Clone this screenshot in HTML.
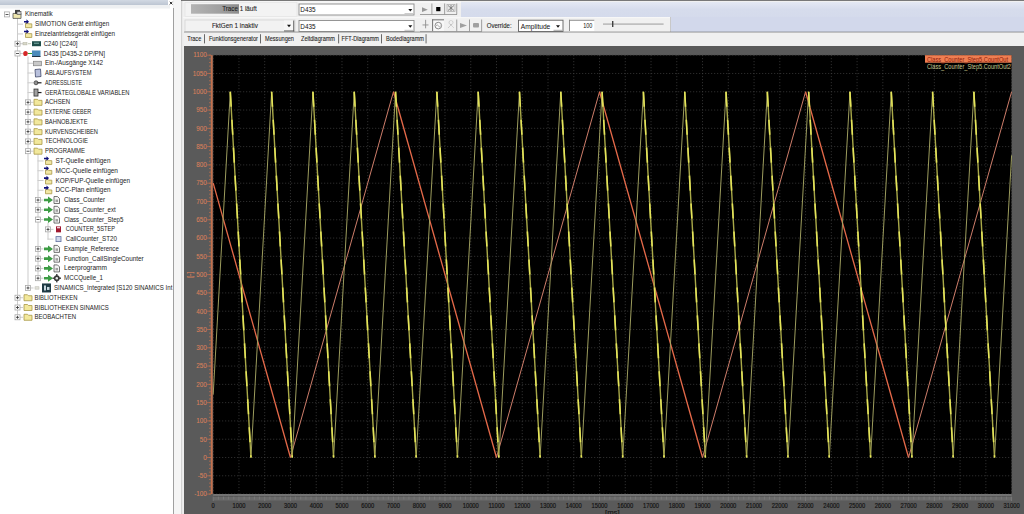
<!DOCTYPE html><html><head><meta charset="utf-8"><style>
*{margin:0;padding:0}
html,body{width:1024px;height:514px;overflow:hidden;background:#f0f0f0}
svg{position:absolute;left:0;top:0;font-family:"Liberation Sans", sans-serif}
</style></head><body>
<svg width="1024" height="514" viewBox="0 0 1024 514" font-family="Liberation Sans">
<rect x="0.00" y="0.00" width="1024.00" height="514.00" fill="#f0f0f0" /><rect x="0.00" y="0.00" width="173.00" height="514.00" fill="#ffffff" /><defs><linearGradient id="hdr" x1="0" y1="0" x2="0" y2="1"><stop offset="0" stop-color="#d2d9e3"/><stop offset="1" stop-color="#bcc5d2"/></linearGradient><linearGradient id="prog" x1="0" y1="0" x2="1" y2="0"><stop offset="0" stop-color="#b4b4b4"/><stop offset="0.6" stop-color="#a0a0a0"/><stop offset="1" stop-color="#8c8c8c"/></linearGradient><clipPath id="treeclip"><rect x="0" y="0" width="172.8" height="514"/></clipPath><linearGradient id="lav" x1="0" y1="0" x2="0" y2="1"><stop offset="0" stop-color="#e4e8f3"/><stop offset="0.25" stop-color="#d6dcec"/><stop offset="1" stop-color="#d2d8eb"/></linearGradient></defs><rect x="0.00" y="5.00" width="170.00" height="3.50" fill="#eef0f2" /><rect x="0.00" y="0.00" width="168.00" height="5.00" fill="url(#hdr)" /><line x1="169.80" y1="1.80" x2="172.40" y2="4.40" stroke="#111" stroke-width="0.9" /><line x1="172.40" y1="1.80" x2="169.80" y2="4.40" stroke="#111" stroke-width="0.9" /><rect x="173.00" y="8.00" width="1.00" height="506.00" fill="#a0a0a0" /><rect x="174.00" y="0.00" width="7.50" height="514.00" fill="#f5f5f5" /><rect x="181.30" y="0.00" width="1.00" height="514.00" fill="#c4c4c4" /><rect x="182.30" y="0.00" width="1.70" height="514.00" fill="#eeeeee" /><rect x="17.00" y="17.40" width="1.00" height="300.37" fill="#cccccc" /><rect x="27.50" y="56.48" width="1.00" height="231.98" fill="#cccccc" /><rect x="37.50" y="154.18" width="1.00" height="124.51" fill="#cccccc" /><rect x="47.50" y="222.57" width="1.00" height="17.04" fill="#cccccc" /><rect x="17.00" y="23.67" width="6.00" height="1.00" fill="#cccccc" /><rect x="17.00" y="33.44" width="6.00" height="1.00" fill="#cccccc" /><rect x="17.00" y="43.21" width="6.00" height="1.00" fill="#cccccc" /><rect x="17.00" y="52.98" width="6.00" height="1.00" fill="#cccccc" /><rect x="27.50" y="62.75" width="6.00" height="1.00" fill="#cccccc" /><rect x="27.50" y="72.52" width="6.00" height="1.00" fill="#cccccc" /><rect x="27.50" y="82.29" width="6.00" height="1.00" fill="#cccccc" /><rect x="27.50" y="92.06" width="6.00" height="1.00" fill="#cccccc" /><rect x="27.50" y="101.83" width="6.00" height="1.00" fill="#cccccc" /><rect x="27.50" y="111.60" width="6.00" height="1.00" fill="#cccccc" /><rect x="27.50" y="121.37" width="6.00" height="1.00" fill="#cccccc" /><rect x="27.50" y="131.14" width="6.00" height="1.00" fill="#cccccc" /><rect x="27.50" y="140.91" width="6.00" height="1.00" fill="#cccccc" /><rect x="27.50" y="150.68" width="6.00" height="1.00" fill="#cccccc" /><rect x="37.50" y="160.45" width="6.00" height="1.00" fill="#cccccc" /><rect x="37.50" y="170.22" width="6.00" height="1.00" fill="#cccccc" /><rect x="37.50" y="179.99" width="6.00" height="1.00" fill="#cccccc" /><rect x="37.50" y="189.76" width="6.00" height="1.00" fill="#cccccc" /><rect x="37.50" y="199.53" width="6.00" height="1.00" fill="#cccccc" /><rect x="37.50" y="209.30" width="6.00" height="1.00" fill="#cccccc" /><rect x="37.50" y="219.07" width="6.00" height="1.00" fill="#cccccc" /><rect x="47.50" y="228.84" width="6.00" height="1.00" fill="#cccccc" /><rect x="47.50" y="238.61" width="6.00" height="1.00" fill="#cccccc" /><rect x="37.50" y="248.38" width="6.00" height="1.00" fill="#cccccc" /><rect x="37.50" y="258.15" width="6.00" height="1.00" fill="#cccccc" /><rect x="37.50" y="267.92" width="6.00" height="1.00" fill="#cccccc" /><rect x="37.50" y="277.69" width="6.00" height="1.00" fill="#cccccc" /><rect x="27.50" y="287.46" width="6.00" height="1.00" fill="#cccccc" /><rect x="17.00" y="297.23" width="6.00" height="1.00" fill="#cccccc" /><rect x="17.00" y="307.00" width="6.00" height="1.00" fill="#cccccc" /><rect x="17.00" y="316.77" width="6.00" height="1.00" fill="#cccccc" /><rect x="4.50" y="11.90" width="5.00" height="5.00" fill="#fff" stroke="#a8a8a8" stroke-width="0.8"/><rect x="5.50" y="14.00" width="3.00" height="0.80" fill="#303030" /><polygon points="13.00,13.40 21.00,13.40 21.00,18.40 13.00,18.40" fill="#f0e8b0" stroke="#505050" stroke-width="0.8"/><rect x="15.00" y="9.90" width="5.00" height="4.00" fill="#404040" /><rect x="17.00" y="11.40" width="4.00" height="3.00" fill="#d0d0d0" stroke="#404040" stroke-width="0.6"/><text x="25.00" y="16.45" font-size="6.3" fill="#1c1c1c" textLength="27.75" lengthAdjust="spacingAndGlyphs" clip-path="url(#treeclip)">Kinematik</text><polygon points="25.50,23.17 28.00,23.17 28.80,23.87 31.80,23.87 31.80,27.67 25.50,27.67" fill="#f2e8a4" stroke="#a89848" stroke-width="0.8"/><polygon points="24.00,20.97 26.50,20.97 26.50,19.37 29.00,21.77 26.50,24.17 26.50,22.57 24.00,22.57" fill="#10107a" /><text x="35.00" y="26.22" font-size="6.3" fill="#1c1c1c" textLength="74.25" lengthAdjust="spacingAndGlyphs" clip-path="url(#treeclip)">SIMOTION Gerät einfügen</text><polygon points="25.50,32.94 28.00,32.94 28.80,33.64 31.80,33.64 31.80,37.44 25.50,37.44" fill="#f2e8a4" stroke="#a89848" stroke-width="0.8"/><polygon points="24.00,30.74 26.50,30.74 26.50,29.14 29.00,31.54 26.50,33.94 26.50,32.34 24.00,32.34" fill="#10107a" /><text x="35.00" y="35.99" font-size="6.3" fill="#1c1c1c" textLength="80.00" lengthAdjust="spacingAndGlyphs" clip-path="url(#treeclip)">Einzelantriebsgerät einfügen</text><rect x="15.00" y="41.21" width="5.00" height="5.00" fill="#fff" stroke="#a8a8a8" stroke-width="0.8"/><rect x="16.00" y="43.31" width="3.00" height="0.80" fill="#303030" /><rect x="17.10" y="42.21" width="0.80" height="3.00" fill="#303030" /><rect x="23.00" y="42.51" width="4.00" height="2.40" fill="#d8d8c8" stroke="#b0b0a0" stroke-width="0.5"/><rect x="28.00" y="43.21" width="3.00" height="1.00" fill="#c0c8b0" /><rect x="32.00" y="41.21" width="9.00" height="5.00" fill="#1f4e4a" /><rect x="34.00" y="42.71" width="5.00" height="1.00" fill="#7fb0a8" /><text x="43.75" y="45.76" font-size="6.3" fill="#1c1c1c" textLength="33.75" lengthAdjust="spacingAndGlyphs" clip-path="url(#treeclip)">C240 [C240]</text><rect x="15.00" y="50.98" width="5.00" height="5.00" fill="#fff" stroke="#a8a8a8" stroke-width="0.8"/><rect x="16.00" y="53.08" width="3.00" height="0.80" fill="#303030" /><ellipse cx="25.5" cy="53.48" rx="2.3" ry="2.6" fill="#d42828"/><rect x="28.00" y="52.98" width="4.00" height="1.00" fill="#30a030" /><rect x="32.00" y="50.48" width="8.50" height="6.00" fill="#4c8cbc" /><rect x="32.00" y="55.98" width="8.50" height="1.00" fill="#203040" /><text x="43.75" y="55.53" font-size="6.3" fill="#1c1c1c" textLength="61.25" lengthAdjust="spacingAndGlyphs" clip-path="url(#treeclip)">D435 [D435-2 DP/PN]</text><rect x="33.50" y="61.25" width="8.00" height="4.50" fill="#c8c8c8" stroke="#808080" stroke-width="0.7"/><text x="45.00" y="65.30" font-size="6.3" fill="#1c1c1c" textLength="58.00" lengthAdjust="spacingAndGlyphs" clip-path="url(#treeclip)">Ein-/Ausgänge X142</text><polygon points="35.00,69.52 40.50,69.02 41.00,76.52 35.50,77.02" fill="#b8c0dc" stroke="#404868" stroke-width="0.8"/><text x="45.00" y="75.07" font-size="6.3" fill="#1c1c1c" textLength="46.50" lengthAdjust="spacingAndGlyphs" clip-path="url(#treeclip)">ABLAUFSYSTEM</text><circle cx="36" cy="82.79" r="2" fill="#909090" stroke="#303030" stroke-width="0.7"/><rect x="37.50" y="82.19" width="4.00" height="1.20" fill="#202020" /><text x="45.00" y="84.84" font-size="6.3" fill="#1c1c1c" textLength="37.00" lengthAdjust="spacingAndGlyphs" clip-path="url(#treeclip)">ADRESSLISTE</text><rect x="34.00" y="89.06" width="4.00" height="7.00" fill="#a0a0a0" stroke="#303030" stroke-width="0.8"/><rect x="38.00" y="91.96" width="3.50" height="1.20" fill="#202020" /><text x="45.00" y="94.61" font-size="6.3" fill="#1c1c1c" textLength="84.50" lengthAdjust="spacingAndGlyphs" clip-path="url(#treeclip)">GERÄTEGLOBALE VARIABLEN</text><rect x="25.50" y="99.83" width="5.00" height="5.00" fill="#fff" stroke="#a8a8a8" stroke-width="0.8"/><rect x="26.50" y="101.93" width="3.00" height="0.80" fill="#303030" /><rect x="27.60" y="100.83" width="0.80" height="3.00" fill="#303030" /><polygon points="34.00,99.33 37.50,99.33 38.50,100.33 42.00,100.33 42.00,105.33 34.00,105.33" fill="#f2e89c" stroke="#a89848" stroke-width="0.8"/><text x="45.00" y="104.38" font-size="6.3" fill="#1c1c1c" textLength="25.00" lengthAdjust="spacingAndGlyphs" clip-path="url(#treeclip)">ACHSEN</text><rect x="25.50" y="109.60" width="5.00" height="5.00" fill="#fff" stroke="#a8a8a8" stroke-width="0.8"/><rect x="26.50" y="111.70" width="3.00" height="0.80" fill="#303030" /><rect x="27.60" y="110.60" width="0.80" height="3.00" fill="#303030" /><polygon points="34.00,109.10 37.50,109.10 38.50,110.10 42.00,110.10 42.00,115.10 34.00,115.10" fill="#f2e89c" stroke="#a89848" stroke-width="0.8"/><text x="45.00" y="114.15" font-size="6.3" fill="#1c1c1c" textLength="46.25" lengthAdjust="spacingAndGlyphs" clip-path="url(#treeclip)">EXTERNE GEBER</text><rect x="25.50" y="119.37" width="5.00" height="5.00" fill="#fff" stroke="#a8a8a8" stroke-width="0.8"/><rect x="26.50" y="121.47" width="3.00" height="0.80" fill="#303030" /><rect x="27.60" y="120.37" width="0.80" height="3.00" fill="#303030" /><polygon points="34.00,118.87 37.50,118.87 38.50,119.87 42.00,119.87 42.00,124.87 34.00,124.87" fill="#f2e89c" stroke="#a89848" stroke-width="0.8"/><text x="45.00" y="123.92" font-size="6.3" fill="#1c1c1c" textLength="42.50" lengthAdjust="spacingAndGlyphs" clip-path="url(#treeclip)">BAHNOBJEKTE</text><rect x="25.50" y="129.14" width="5.00" height="5.00" fill="#fff" stroke="#a8a8a8" stroke-width="0.8"/><rect x="26.50" y="131.24" width="3.00" height="0.80" fill="#303030" /><rect x="27.60" y="130.14" width="0.80" height="3.00" fill="#303030" /><polygon points="34.00,128.64 37.50,128.64 38.50,129.64 42.00,129.64 42.00,134.64 34.00,134.64" fill="#f2e89c" stroke="#a89848" stroke-width="0.8"/><text x="45.00" y="133.69" font-size="6.3" fill="#1c1c1c" textLength="53.00" lengthAdjust="spacingAndGlyphs" clip-path="url(#treeclip)">KURVENSCHEIBEN</text><rect x="25.50" y="138.91" width="5.00" height="5.00" fill="#fff" stroke="#a8a8a8" stroke-width="0.8"/><rect x="26.50" y="141.01" width="3.00" height="0.80" fill="#303030" /><rect x="27.60" y="139.91" width="0.80" height="3.00" fill="#303030" /><polygon points="34.00,138.41 37.50,138.41 38.50,139.41 42.00,139.41 42.00,144.41 34.00,144.41" fill="#f2e89c" stroke="#a89848" stroke-width="0.8"/><text x="45.00" y="143.46" font-size="6.3" fill="#1c1c1c" textLength="43.00" lengthAdjust="spacingAndGlyphs" clip-path="url(#treeclip)">TECHNOLOGIE</text><rect x="25.50" y="148.68" width="5.00" height="5.00" fill="#fff" stroke="#a8a8a8" stroke-width="0.8"/><rect x="26.50" y="150.78" width="3.00" height="0.80" fill="#303030" /><polygon points="34.00,148.18 37.50,148.18 38.50,149.18 42.00,149.18 42.00,154.18 34.00,154.18" fill="#f2e89c" stroke="#a89848" stroke-width="0.8"/><text x="45.00" y="153.23" font-size="6.3" fill="#1c1c1c" textLength="40.00" lengthAdjust="spacingAndGlyphs" clip-path="url(#treeclip)">PROGRAMME</text><polygon points="45.50,159.95 48.00,159.95 48.80,160.65 51.80,160.65 51.80,164.45 45.50,164.45" fill="#f2e8a4" stroke="#a89848" stroke-width="0.8"/><polygon points="44.00,157.75 46.50,157.75 46.50,156.15 49.00,158.55 46.50,160.95 46.50,159.35 44.00,159.35" fill="#10107a" /><text x="55.50" y="163.00" font-size="6.3" fill="#1c1c1c" textLength="55.00" lengthAdjust="spacingAndGlyphs" clip-path="url(#treeclip)">ST-Quelle einfügen</text><polygon points="45.50,169.72 48.00,169.72 48.80,170.42 51.80,170.42 51.80,174.22 45.50,174.22" fill="#f2e8a4" stroke="#a89848" stroke-width="0.8"/><polygon points="44.00,167.52 46.50,167.52 46.50,165.92 49.00,168.32 46.50,170.72 46.50,169.12 44.00,169.12" fill="#10107a" /><text x="55.50" y="172.77" font-size="6.3" fill="#1c1c1c" textLength="62.50" lengthAdjust="spacingAndGlyphs" clip-path="url(#treeclip)">MCC-Quelle einfügen</text><polygon points="45.50,179.49 48.00,179.49 48.80,180.19 51.80,180.19 51.80,183.99 45.50,183.99" fill="#f2e8a4" stroke="#a89848" stroke-width="0.8"/><polygon points="44.00,177.29 46.50,177.29 46.50,175.69 49.00,178.09 46.50,180.49 46.50,178.89 44.00,178.89" fill="#10107a" /><text x="55.50" y="182.54" font-size="6.3" fill="#1c1c1c" textLength="74.50" lengthAdjust="spacingAndGlyphs" clip-path="url(#treeclip)">KOP/FUP-Quelle einfügen</text><polygon points="45.50,189.26 48.00,189.26 48.80,189.96 51.80,189.96 51.80,193.76 45.50,193.76" fill="#f2e8a4" stroke="#a89848" stroke-width="0.8"/><polygon points="44.00,187.06 46.50,187.06 46.50,185.46 49.00,187.86 46.50,190.26 46.50,188.66 44.00,188.66" fill="#10107a" /><text x="55.50" y="192.31" font-size="6.3" fill="#1c1c1c" textLength="55.00" lengthAdjust="spacingAndGlyphs" clip-path="url(#treeclip)">DCC-Plan einfügen</text><rect x="35.50" y="197.53" width="5.00" height="5.00" fill="#fff" stroke="#a8a8a8" stroke-width="0.8"/><rect x="36.50" y="199.63" width="3.00" height="0.80" fill="#303030" /><rect x="37.60" y="198.53" width="0.80" height="3.00" fill="#303030" /><polygon points="44.00,198.73 48.00,198.73 48.00,196.53 53.00,200.03 48.00,203.53 48.00,201.33 44.00,201.33" fill="#3c9c44" /><polygon points="54.00,196.53 57.50,196.53 59.50,198.53 59.50,203.53 54.00,203.53" fill="#f4f4f4" stroke="#505050" stroke-width="0.8"/><rect x="55.50" y="199.53" width="2.50" height="2.50" fill="#a0a0a0" /><text x="64.00" y="202.08" font-size="6.3" fill="#1c1c1c" textLength="41.00" lengthAdjust="spacingAndGlyphs" clip-path="url(#treeclip)">Class_Counter</text><rect x="35.50" y="207.30" width="5.00" height="5.00" fill="#fff" stroke="#a8a8a8" stroke-width="0.8"/><rect x="36.50" y="209.40" width="3.00" height="0.80" fill="#303030" /><rect x="37.60" y="208.30" width="0.80" height="3.00" fill="#303030" /><polygon points="44.00,208.50 48.00,208.50 48.00,206.30 53.00,209.80 48.00,213.30 48.00,211.10 44.00,211.10" fill="#3c9c44" /><polygon points="54.00,206.30 57.50,206.30 59.50,208.30 59.50,213.30 54.00,213.30" fill="#f4f4f4" stroke="#505050" stroke-width="0.8"/><rect x="55.50" y="209.30" width="2.50" height="2.50" fill="#a0a0a0" /><text x="64.00" y="211.85" font-size="6.3" fill="#1c1c1c" textLength="51.75" lengthAdjust="spacingAndGlyphs" clip-path="url(#treeclip)">Class_Counter_ext</text><rect x="35.50" y="217.07" width="5.00" height="5.00" fill="#fff" stroke="#a8a8a8" stroke-width="0.8"/><rect x="36.50" y="219.17" width="3.00" height="0.80" fill="#303030" /><polygon points="44.00,218.27 48.00,218.27 48.00,216.07 53.00,219.57 48.00,223.07 48.00,220.87 44.00,220.87" fill="#3c9c44" /><polygon points="54.00,216.07 57.50,216.07 59.50,218.07 59.50,223.07 54.00,223.07" fill="#f4f4f4" stroke="#505050" stroke-width="0.8"/><rect x="55.50" y="219.07" width="2.50" height="2.50" fill="#a0a0a0" /><text x="64.00" y="221.62" font-size="6.3" fill="#1c1c1c" textLength="59.25" lengthAdjust="spacingAndGlyphs" clip-path="url(#treeclip)">Class_Counter_Step5</text><rect x="45.50" y="226.84" width="5.00" height="5.00" fill="#fff" stroke="#a8a8a8" stroke-width="0.8"/><rect x="46.50" y="228.94" width="3.00" height="0.80" fill="#303030" /><rect x="47.60" y="227.84" width="0.80" height="3.00" fill="#303030" /><rect x="56.00" y="226.34" width="5.00" height="6.00" fill="#a01830" /><rect x="57.00" y="226.84" width="3.00" height="1.50" fill="#f0d0d8" /><text x="65.75" y="231.39" font-size="6.3" fill="#1c1c1c" textLength="49.25" lengthAdjust="spacingAndGlyphs" clip-path="url(#treeclip)">COUNTER_5STEP</text><rect x="56.00" y="236.61" width="5.00" height="5.00" fill="#d0d8ec" stroke="#6070a0" stroke-width="0.8"/><text x="65.75" y="241.16" font-size="6.3" fill="#1c1c1c" textLength="51.25" lengthAdjust="spacingAndGlyphs" clip-path="url(#treeclip)">CallCounter_ST20</text><rect x="35.50" y="246.38" width="5.00" height="5.00" fill="#fff" stroke="#a8a8a8" stroke-width="0.8"/><rect x="36.50" y="248.48" width="3.00" height="0.80" fill="#303030" /><rect x="37.60" y="247.38" width="0.80" height="3.00" fill="#303030" /><polygon points="44.00,247.58 48.00,247.58 48.00,245.38 53.00,248.88 48.00,252.38 48.00,250.18 44.00,250.18" fill="#3c9c44" /><polygon points="54.00,245.38 57.50,245.38 59.50,247.38 59.50,252.38 54.00,252.38" fill="#f4f4f4" stroke="#505050" stroke-width="0.8"/><rect x="55.50" y="248.38" width="2.50" height="2.50" fill="#a0a0a0" /><text x="64.00" y="250.93" font-size="6.3" fill="#1c1c1c" textLength="54.75" lengthAdjust="spacingAndGlyphs" clip-path="url(#treeclip)">Example_Reference</text><rect x="35.50" y="256.15" width="5.00" height="5.00" fill="#fff" stroke="#a8a8a8" stroke-width="0.8"/><rect x="36.50" y="258.25" width="3.00" height="0.80" fill="#303030" /><rect x="37.60" y="257.15" width="0.80" height="3.00" fill="#303030" /><polygon points="44.00,257.35 48.00,257.35 48.00,255.15 53.00,258.65 48.00,262.15 48.00,259.95 44.00,259.95" fill="#3c9c44" /><polygon points="54.00,255.15 57.50,255.15 59.50,257.15 59.50,262.15 54.00,262.15" fill="#f4f4f4" stroke="#505050" stroke-width="0.8"/><rect x="55.50" y="258.15" width="2.50" height="2.50" fill="#a0a0a0" /><text x="64.00" y="260.70" font-size="6.3" fill="#1c1c1c" textLength="79.75" lengthAdjust="spacingAndGlyphs" clip-path="url(#treeclip)">Function_CallSingleCounter</text><rect x="35.50" y="265.92" width="5.00" height="5.00" fill="#fff" stroke="#a8a8a8" stroke-width="0.8"/><rect x="36.50" y="268.02" width="3.00" height="0.80" fill="#303030" /><rect x="37.60" y="266.92" width="0.80" height="3.00" fill="#303030" /><polygon points="44.00,267.12 48.00,267.12 48.00,264.92 53.00,268.42 48.00,271.92 48.00,269.72 44.00,269.72" fill="#3c9c44" /><polygon points="54.00,264.92 57.50,264.92 59.50,266.92 59.50,271.92 54.00,271.92" fill="#f4f4f4" stroke="#505050" stroke-width="0.8"/><rect x="55.50" y="267.92" width="2.50" height="2.50" fill="#a0a0a0" /><text x="64.00" y="270.47" font-size="6.3" fill="#1c1c1c" textLength="43.00" lengthAdjust="spacingAndGlyphs" clip-path="url(#treeclip)">Leerprogramm</text><rect x="35.50" y="275.69" width="5.00" height="5.00" fill="#fff" stroke="#a8a8a8" stroke-width="0.8"/><rect x="36.50" y="277.79" width="3.00" height="0.80" fill="#303030" /><rect x="37.60" y="276.69" width="0.80" height="3.00" fill="#303030" /><polygon points="44.00,276.89 48.00,276.89 48.00,274.69 53.00,278.19 48.00,281.69 48.00,279.49 44.00,279.49" fill="#3c9c44" /><circle cx="56.8" cy="278.19" r="2.9" fill="#383838"/><circle cx="56.8" cy="278.19" r="1.2" fill="#f0f0f0"/><rect x="56.10" y="273.99" width="1.40" height="8.40" fill="#383838" /><rect x="52.60" y="277.49" width="8.40" height="1.40" fill="#383838" /><circle cx="56.8" cy="278.19" r="1.2" fill="#e8e8e8"/><text x="64.00" y="280.24" font-size="6.3" fill="#1c1c1c" textLength="39.00" lengthAdjust="spacingAndGlyphs" clip-path="url(#treeclip)">MCCQuelle_1</text><rect x="25.50" y="285.46" width="5.00" height="5.00" fill="#fff" stroke="#a8a8a8" stroke-width="0.8"/><rect x="26.50" y="287.56" width="3.00" height="0.80" fill="#303030" /><rect x="27.60" y="286.46" width="0.80" height="3.00" fill="#303030" /><rect x="35.00" y="286.76" width="4.00" height="2.40" fill="#e0e0d8" stroke="#b8b8b0" stroke-width="0.5"/><rect x="42.00" y="283.46" width="9.00" height="9.00" fill="#1e3a44" /><rect x="44.00" y="285.46" width="2.00" height="5.00" fill="#c8d8e0" /><rect x="47.00" y="286.96" width="2.50" height="3.00" fill="#c8d8e0" /><text x="54.00" y="290.01" font-size="6.3" fill="#1c1c1c" textLength="118.40" lengthAdjust="spacingAndGlyphs" clip-path="url(#treeclip)">SINAMICS_Integrated [S120 SINAMICS Int</text><rect x="15.00" y="295.23" width="5.00" height="5.00" fill="#fff" stroke="#a8a8a8" stroke-width="0.8"/><rect x="16.00" y="297.33" width="3.00" height="0.80" fill="#303030" /><rect x="17.10" y="296.23" width="0.80" height="3.00" fill="#303030" /><polygon points="24.00,294.73 27.50,294.73 28.50,295.73 32.00,295.73 32.00,300.73 24.00,300.73" fill="#f2e89c" stroke="#a89848" stroke-width="0.8"/><text x="34.50" y="299.78" font-size="6.3" fill="#1c1c1c" textLength="43.00" lengthAdjust="spacingAndGlyphs" clip-path="url(#treeclip)">BIBLIOTHEKEN</text><rect x="15.00" y="305.00" width="5.00" height="5.00" fill="#fff" stroke="#a8a8a8" stroke-width="0.8"/><rect x="16.00" y="307.10" width="3.00" height="0.80" fill="#303030" /><rect x="17.10" y="306.00" width="0.80" height="3.00" fill="#303030" /><polygon points="24.00,304.50 27.50,304.50 28.50,305.50 32.00,305.50 32.00,310.50 24.00,310.50" fill="#f2e89c" stroke="#a89848" stroke-width="0.8"/><text x="34.50" y="309.55" font-size="6.3" fill="#1c1c1c" textLength="74.25" lengthAdjust="spacingAndGlyphs" clip-path="url(#treeclip)">BIBLIOTHEKEN SINAMICS</text><rect x="15.00" y="314.77" width="5.00" height="5.00" fill="#fff" stroke="#a8a8a8" stroke-width="0.8"/><rect x="16.00" y="316.87" width="3.00" height="0.80" fill="#303030" /><rect x="17.10" y="315.77" width="0.80" height="3.00" fill="#303030" /><polygon points="24.00,314.27 27.50,314.27 28.50,315.27 32.00,315.27 32.00,320.27 24.00,320.27" fill="#f2e89c" stroke="#a89848" stroke-width="0.8"/><text x="34.50" y="319.32" font-size="6.3" fill="#1c1c1c" textLength="41.50" lengthAdjust="spacingAndGlyphs" clip-path="url(#treeclip)">BEOBACHTEN</text><rect x="181.00" y="0.00" width="843.00" height="0.80" fill="#5a5a5a" /><rect x="461.00" y="2.00" width="563.00" height="30.00" fill="url(#lav)" /><rect x="671.00" y="17.00" width="353.00" height="15.00" fill="#d2d8eb" /><rect x="183.00" y="1.00" width="278.00" height="16.00" fill="#f0f0f0" /><rect x="183.00" y="1.50" width="278.00" height="1.00" fill="#fbfbfb" /><rect x="185.00" y="2.50" width="112.00" height="14.00" fill="#f3f3f3" stroke="#e2e2e2" stroke-width="0.6"/><rect x="191.00" y="4.20" width="48.00" height="9.50" fill="url(#prog)" /><text x="222.20" y="11.30" font-size="6.6" fill="#1e1e1e" textLength="34.50" lengthAdjust="spacingAndGlyphs" stroke="#1e1e1e" stroke-width="0.1">Trace 1 läuft</text><rect x="299.00" y="4.00" width="115.00" height="11.00" fill="#fff" stroke="#8a8a8a" stroke-width="0.9"/><text x="300.30" y="12.30" font-size="6.6" fill="#111" textLength="15.20" lengthAdjust="spacingAndGlyphs" >D435</text><polygon points="408.30,9.00 412.30,9.00 410.30,11.50" fill="#111" /><rect x="404.50" y="13.20" width="9.00" height="1.00" fill="#c0c0c0" /><polygon points="422.00,7.30 427.80,9.70 422.00,12.10" fill="#989898" /><rect x="436.20" y="7.00" width="4.20" height="4.20" fill="#000" /><rect x="447.00" y="4.50" width="8.00" height="7.00" fill="#e8e8e8" stroke="#a0a0a0" stroke-width="0.6"/><path d="M448 5.5l6 5M454 5.5l-6 5M451 5v6" stroke="#707070" stroke-width="0.8"/><rect x="431.50" y="3.50" width="0.80" height="11.00" fill="#8a8a8a" /><rect x="444.30" y="3.50" width="0.80" height="11.00" fill="#8a8a8a" /><rect x="456.40" y="3.50" width="0.80" height="11.00" fill="#8a8a8a" /><rect x="420.00" y="14.20" width="37.00" height="0.80" fill="#8a8a8a" /><rect x="183.00" y="17.00" width="488.00" height="15.00" fill="#f0f0f0" /><rect x="183.00" y="17.30" width="488.00" height="0.80" fill="#fafafa" /><rect x="185.00" y="20.00" width="110.00" height="11.50" fill="#f2f2f2" stroke="#d0d0d0" stroke-width="0.7"/><text x="212.00" y="27.70" font-size="6.6" fill="#1e1e1e" textLength="45.80" lengthAdjust="spacingAndGlyphs" stroke="#1e1e1e" stroke-width="0.1">FktGen 1 inaktiv</text><rect x="284.00" y="20.50" width="10.00" height="10.50" fill="#f6f6f6" /><rect x="293.30" y="20.50" width="0.90" height="11.00" fill="#505050" /><rect x="284.00" y="30.50" width="10.20" height="0.90" fill="#505050" /><polygon points="287.00,24.80 291.00,24.80 289.00,27.30" fill="#111" /><rect x="299.00" y="20.50" width="115.00" height="11.00" fill="#fff" stroke="#8a8a8a" stroke-width="0.9"/><text x="300.30" y="28.60" font-size="6.6" fill="#111" textLength="15.20" lengthAdjust="spacingAndGlyphs" >D435</text><polygon points="408.30,25.30 412.30,25.30 410.30,27.80" fill="#111" /><rect x="404.50" y="29.80" width="9.00" height="1.00" fill="#c0c0c0" /><rect x="425.20" y="19.80" width="0.90" height="8.50" fill="#909090" /><rect x="422.50" y="24.50" width="6.00" height="0.90" fill="#909090" /><rect x="432.20" y="19.40" width="11.80" height="12.10" fill="#f8f8f8" /><rect x="432.20" y="19.40" width="0.90" height="12.10" fill="#606060" /><rect x="432.20" y="19.40" width="11.80" height="0.90" fill="#606060" /><circle cx="438.3" cy="25.6" r="3.3" fill="none" stroke="#707070" stroke-width="0.8"/><path d="M436 25.8q1.2-2 2.3 0t2.3 0" fill="none" stroke="#707070" stroke-width="0.6"/><path d="M449 22.5a2 2 0 1 0 4 0a2 2 0 1 0 -4 0M448 28l3-3l3 3M451 25v-1" fill="none" stroke="#b0b0b0" stroke-width="0.8" stroke-dasharray="1 0.6"/><polygon points="460.00,23.00 467.00,25.50 460.00,28.00" fill="#a0a0a0" /><rect x="473.00" y="23.00" width="6.00" height="4.50" fill="#a0a0a0" rx="1"/><rect x="456.40" y="19.50" width="0.80" height="12.00" fill="#8a8a8a" /><rect x="469.20" y="19.50" width="0.80" height="12.00" fill="#8a8a8a" /><rect x="481.30" y="19.50" width="0.80" height="12.00" fill="#8a8a8a" /><rect x="420.00" y="31.00" width="62.00" height="0.80" fill="#a0a0a0" /><text x="486.80" y="28.00" font-size="6.6" fill="#1e1e1e" textLength="24.80" lengthAdjust="spacingAndGlyphs" stroke="#1e1e1e" stroke-width="0.1">Override:</text><rect x="518.50" y="20.20" width="44.50" height="11.30" fill="#fff" stroke="#606060" stroke-width="0.9"/><text x="520.80" y="28.60" font-size="6.8" fill="#111" textLength="29.50" lengthAdjust="spacingAndGlyphs" >Amplitude</text><polygon points="556.00,25.30 560.00,25.30 558.00,27.80" fill="#111" /><rect x="553.50" y="29.80" width="9.00" height="1.00" fill="#a8a8a8" /><rect x="569.00" y="19.80" width="25.30" height="11.20" fill="#fff" /><rect x="569.00" y="19.80" width="25.30" height="0.90" fill="#808080" /><rect x="569.00" y="19.80" width="0.90" height="11.20" fill="#808080" /><text x="583.20" y="28.00" font-size="6.3" fill="#111" textLength="9.20" lengthAdjust="spacingAndGlyphs" >100</text><rect x="603.00" y="23.40" width="60.60" height="1.40" fill="#b4b4b4" /><rect x="612.00" y="21.00" width="1.40" height="6.00" fill="#404040" /><rect x="670.00" y="17.00" width="1.00" height="15.00" fill="#c8c8c8" /><rect x="184.00" y="31.70" width="840.00" height="0.90" fill="#6e6e6e" /><rect x="184.00" y="32.60" width="840.00" height="13.40" fill="#f0f0f0" /><text x="187.20" y="41.20" font-size="7.0" fill="#1e1e1e" textLength="14.10" lengthAdjust="spacingAndGlyphs" stroke="#1e1e1e" stroke-width="0.1">Trace</text><rect x="204.10" y="34.20" width="0.90" height="9.20" fill="#5a5a5a" /><text x="208.90" y="41.20" font-size="7.0" fill="#1e1e1e" textLength="49.10" lengthAdjust="spacingAndGlyphs" stroke="#1e1e1e" stroke-width="0.1">Funktionsgenerator</text><rect x="260.10" y="34.20" width="0.90" height="9.20" fill="#5a5a5a" /><text x="265.00" y="41.20" font-size="7.0" fill="#1e1e1e" textLength="29.00" lengthAdjust="spacingAndGlyphs" stroke="#1e1e1e" stroke-width="0.1">Messungen</text><text x="301.00" y="41.20" font-size="7.0" fill="#1e1e1e" textLength="34.00" lengthAdjust="spacingAndGlyphs" stroke="#1e1e1e" stroke-width="0.1">Zeitdiagramm</text><rect x="338.20" y="34.20" width="0.90" height="9.20" fill="#5a5a5a" /><text x="341.50" y="41.20" font-size="7.0" fill="#1e1e1e" textLength="37.50" lengthAdjust="spacingAndGlyphs" stroke="#1e1e1e" stroke-width="0.1">FFT-Diagramm</text><rect x="381.10" y="34.20" width="0.90" height="9.20" fill="#5a5a5a" /><text x="386.00" y="41.20" font-size="7.0" fill="#1e1e1e" textLength="38.00" lengthAdjust="spacingAndGlyphs" stroke="#1e1e1e" stroke-width="0.1">Bodediagramm</text><rect x="425.60" y="34.20" width="0.90" height="9.20" fill="#5a5a5a" /><rect x="184.00" y="46.00" width="840.00" height="468.00" fill="#5a5a5a" /><rect x="213.20" y="55.17" width="798.40" height="438.90" fill="#000" /><path d="M213.20 55.17V494.07M238.95 55.17V494.07M264.71 55.17V494.07M290.46 55.17V494.07M316.22 55.17V494.07M341.97 55.17V494.07M367.73 55.17V494.07M393.48 55.17V494.07M419.24 55.17V494.07M444.99 55.17V494.07M470.75 55.17V494.07M496.50 55.17V494.07M522.26 55.17V494.07M548.01 55.17V494.07M573.77 55.17V494.07M599.52 55.17V494.07M625.28 55.17V494.07M651.03 55.17V494.07M676.79 55.17V494.07M702.54 55.17V494.07M728.30 55.17V494.07M754.05 55.17V494.07M779.81 55.17V494.07M805.56 55.17V494.07M831.32 55.17V494.07M857.07 55.17V494.07M882.83 55.17V494.07M908.58 55.17V494.07M934.34 55.17V494.07M960.09 55.17V494.07M985.85 55.17V494.07M1011.60 55.17V494.07M213.20 494.07H1011.60M213.20 475.79H1011.60M213.20 457.50H1011.60M213.20 439.21H1011.60M213.20 420.93H1011.60M213.20 402.64H1011.60M213.20 384.35H1011.60M213.20 366.06H1011.60M213.20 347.77H1011.60M213.20 329.49H1011.60M213.20 311.20H1011.60M213.20 292.91H1011.60M213.20 274.62H1011.60M213.20 256.34H1011.60M213.20 238.05H1011.60M213.20 219.76H1011.60M213.20 201.47H1011.60M213.20 183.19H1011.60M213.20 164.90H1011.60M213.20 146.61H1011.60M213.20 128.32H1011.60M213.20 110.04H1011.60M213.20 91.75H1011.60M213.20 73.46H1011.60M213.20 55.17H1011.60" stroke="#444444" stroke-width="0.8" stroke-dasharray="1 2" fill="none"/><rect x="925.00" y="55.20" width="86.60" height="7.50" fill="#ef7e52" /><text x="927.00" y="61.60" font-size="7.2" fill="#8c1c0c" textLength="81.00" lengthAdjust="spacingAndGlyphs" >Class_Counter_Step5.CountOut</text><text x="927.00" y="69.00" font-size="7.2" fill="#c8c890" textLength="84.00" lengthAdjust="spacingAndGlyphs" >Class_Counter_Step5.CountOut2</text><line x1="213.20" y1="183.19" x2="290.46" y2="457.50" stroke="#e66a4a" stroke-width="1.3"/><line x1="290.46" y1="457.50" x2="393.48" y2="91.75" stroke="#d88470" stroke-width="0.95"/><line x1="393.48" y1="91.75" x2="496.50" y2="457.50" stroke="#e66a4a" stroke-width="1.3"/><line x1="496.50" y1="457.50" x2="599.52" y2="91.75" stroke="#d88470" stroke-width="0.95"/><line x1="599.52" y1="91.75" x2="702.54" y2="457.50" stroke="#e66a4a" stroke-width="1.3"/><line x1="702.54" y1="457.50" x2="805.56" y2="91.75" stroke="#d88470" stroke-width="0.95"/><line x1="805.56" y1="91.75" x2="908.58" y2="457.50" stroke="#e66a4a" stroke-width="1.3"/><line x1="908.58" y1="457.50" x2="1011.60" y2="91.75" stroke="#d88470" stroke-width="0.95"/><path d="M213.20 394.55L230.30 91.75M250.96 457.50L271.61 91.75M292.26 457.50L312.92 91.75M333.58 457.50L354.23 91.75M374.88 457.50L395.54 91.75M416.20 457.50L436.85 91.75M457.50 457.50L478.16 91.75M498.82 457.50L519.47 91.75M540.12 457.50L560.78 91.75M581.44 457.50L602.09 91.75M622.75 457.50L643.40 91.75M664.06 457.50L684.71 91.75M705.37 457.50L726.02 91.75M746.67 457.50L767.33 91.75M787.99 457.50L808.64 91.75M829.30 457.50L849.95 91.75M870.61 457.50L891.26 91.75M911.91 457.50L932.57 91.75M953.23 457.50L973.88 91.75M994.54 457.50L1011.60 155.32" fill="none" stroke="#a4a462" stroke-width="0.95"/><path d="M230.30 91.75L250.96 457.50M271.61 91.75L292.26 457.50M312.92 91.75L333.58 457.50M354.23 91.75L374.88 457.50M395.54 91.75L416.20 457.50M436.85 91.75L457.50 457.50M478.16 91.75L498.82 457.50M519.47 91.75L540.12 457.50M560.78 91.75L581.43 457.50M602.09 91.75L622.75 457.50M643.40 91.75L664.06 457.50M684.71 91.75L705.37 457.50M726.02 91.75L746.67 457.50M767.33 91.75L787.98 457.50M808.64 91.75L829.30 457.50M849.95 91.75L870.61 457.50M891.26 91.75L911.91 457.50M932.57 91.75L953.22 457.50M973.88 91.75L994.54 457.50" fill="none" stroke="#a8a848" stroke-width="1.4"/><path d="M230.30 91.75L250.96 457.50M271.61 91.75L292.26 457.50M312.92 91.75L333.58 457.50M354.23 91.75L374.88 457.50M395.54 91.75L416.20 457.50M436.85 91.75L457.50 457.50M478.16 91.75L498.82 457.50M519.47 91.75L540.12 457.50M560.78 91.75L581.43 457.50M602.09 91.75L622.75 457.50M643.40 91.75L664.06 457.50M684.71 91.75L705.37 457.50M726.02 91.75L746.67 457.50M767.33 91.75L787.98 457.50M808.64 91.75L829.30 457.50M849.95 91.75L870.61 457.50M891.26 91.75L911.91 457.50M932.57 91.75L953.22 457.50M973.88 91.75L994.54 457.50" fill="none" stroke="#e4e45a" stroke-width="1.6" stroke-dasharray="15 13"/><rect x="210.80" y="55.17" width="1.80" height="438.90" fill="#c4704c" /><path d="M206.8 494.07H211M206.8 475.79H211M206.8 457.50H211M206.8 439.21H211M206.8 420.93H211M206.8 402.64H211M206.8 384.35H211M206.8 366.06H211M206.8 347.77H211M206.8 329.49H211M206.8 311.20H211M206.8 292.91H211M206.8 274.62H211M206.8 256.34H211M206.8 238.05H211M206.8 219.76H211M206.8 201.47H211M206.8 183.19H211M206.8 164.90H211M206.8 146.61H211M206.8 128.32H211M206.8 110.04H211M206.8 91.75H211M206.8 73.46H211M206.8 55.17H211M209 494.07H210.8M209 490.42H210.8M209 486.76H210.8M209 483.10H210.8M209 479.44H210.8M209 475.79H210.8M209 472.13H210.8M209 468.47H210.8M209 464.81H210.8M209 461.16H210.8M209 457.50H210.8M209 453.84H210.8M209 450.19H210.8M209 446.53H210.8M209 442.87H210.8M209 439.21H210.8M209 435.56H210.8M209 431.90H210.8M209 428.24H210.8M209 424.58H210.8M209 420.93H210.8M209 417.27H210.8M209 413.61H210.8M209 409.95H210.8M209 406.30H210.8M209 402.64H210.8M209 398.98H210.8M209 395.32H210.8M209 391.66H210.8M209 388.01H210.8M209 384.35H210.8M209 380.69H210.8M209 377.03H210.8M209 373.38H210.8M209 369.72H210.8M209 366.06H210.8M209 362.40H210.8M209 358.75H210.8M209 355.09H210.8M209 351.43H210.8M209 347.77H210.8M209 344.12H210.8M209 340.46H210.8M209 336.80H210.8M209 333.14H210.8M209 329.49H210.8M209 325.83H210.8M209 322.17H210.8M209 318.51H210.8M209 314.86H210.8M209 311.20H210.8M209 307.54H210.8M209 303.88H210.8M209 300.23H210.8M209 296.57H210.8M209 292.91H210.8M209 289.25H210.8M209 285.60H210.8M209 281.94H210.8M209 278.28H210.8M209 274.62H210.8M209 270.97H210.8M209 267.31H210.8M209 263.65H210.8M209 260.00H210.8M209 256.34H210.8M209 252.68H210.8M209 249.02H210.8M209 245.36H210.8M209 241.71H210.8M209 238.05H210.8M209 234.39H210.8M209 230.73H210.8M209 227.08H210.8M209 223.42H210.8M209 219.76H210.8M209 216.10H210.8M209 212.45H210.8M209 208.79H210.8M209 205.13H210.8M209 201.47H210.8M209 197.82H210.8M209 194.16H210.8M209 190.50H210.8M209 186.84H210.8M209 183.19H210.8M209 179.53H210.8M209 175.87H210.8M209 172.21H210.8M209 168.56H210.8M209 164.90H210.8M209 161.24H210.8M209 157.58H210.8M209 153.93H210.8M209 150.27H210.8M209 146.61H210.8M209 142.95H210.8M209 139.30H210.8M209 135.64H210.8M209 131.98H210.8M209 128.32H210.8M209 124.67H210.8M209 121.01H210.8M209 117.35H210.8M209 113.69H210.8M209 110.04H210.8M209 106.38H210.8M209 102.72H210.8M209 99.06H210.8M209 95.41H210.8M209 91.75H210.8M209 88.09H210.8M209 84.44H210.8M209 80.78H210.8M209 77.12H210.8M209 73.46H210.8M209 69.81H210.8M209 66.15H210.8M209 62.49H210.8M209 58.83H210.8M209 55.17H210.8" stroke="#c4704c" stroke-width="0.7" fill="none"/><text x="206.80" y="496.38" font-size="6.3" fill="#d8805a" text-anchor="end" stroke="#d8805a" stroke-width="0.08">-100</text><text x="206.80" y="478.09" font-size="6.3" fill="#d8805a" text-anchor="end" stroke="#d8805a" stroke-width="0.08">-50</text><text x="206.80" y="459.80" font-size="6.3" fill="#d8805a" text-anchor="end" stroke="#d8805a" stroke-width="0.08">0</text><text x="206.80" y="441.51" font-size="6.3" fill="#d8805a" text-anchor="end" stroke="#d8805a" stroke-width="0.08">50</text><text x="206.80" y="423.23" font-size="6.3" fill="#d8805a" text-anchor="end" stroke="#d8805a" stroke-width="0.08">100</text><text x="206.80" y="404.94" font-size="6.3" fill="#d8805a" text-anchor="end" stroke="#d8805a" stroke-width="0.08">150</text><text x="206.80" y="386.65" font-size="6.3" fill="#d8805a" text-anchor="end" stroke="#d8805a" stroke-width="0.08">200</text><text x="206.80" y="368.36" font-size="6.3" fill="#d8805a" text-anchor="end" stroke="#d8805a" stroke-width="0.08">250</text><text x="206.80" y="350.07" font-size="6.3" fill="#d8805a" text-anchor="end" stroke="#d8805a" stroke-width="0.08">300</text><text x="206.80" y="331.79" font-size="6.3" fill="#d8805a" text-anchor="end" stroke="#d8805a" stroke-width="0.08">350</text><text x="206.80" y="313.50" font-size="6.3" fill="#d8805a" text-anchor="end" stroke="#d8805a" stroke-width="0.08">400</text><text x="206.80" y="295.21" font-size="6.3" fill="#d8805a" text-anchor="end" stroke="#d8805a" stroke-width="0.08">450</text><text x="206.80" y="276.93" font-size="6.3" fill="#d8805a" text-anchor="end" stroke="#d8805a" stroke-width="0.08">500</text><text x="206.80" y="258.64" font-size="6.3" fill="#d8805a" text-anchor="end" stroke="#d8805a" stroke-width="0.08">550</text><text x="206.80" y="240.35" font-size="6.3" fill="#d8805a" text-anchor="end" stroke="#d8805a" stroke-width="0.08">600</text><text x="206.80" y="222.06" font-size="6.3" fill="#d8805a" text-anchor="end" stroke="#d8805a" stroke-width="0.08">650</text><text x="206.80" y="203.77" font-size="6.3" fill="#d8805a" text-anchor="end" stroke="#d8805a" stroke-width="0.08">700</text><text x="206.80" y="185.49" font-size="6.3" fill="#d8805a" text-anchor="end" stroke="#d8805a" stroke-width="0.08">750</text><text x="206.80" y="167.20" font-size="6.3" fill="#d8805a" text-anchor="end" stroke="#d8805a" stroke-width="0.08">800</text><text x="206.80" y="148.91" font-size="6.3" fill="#d8805a" text-anchor="end" stroke="#d8805a" stroke-width="0.08">850</text><text x="206.80" y="130.62" font-size="6.3" fill="#d8805a" text-anchor="end" stroke="#d8805a" stroke-width="0.08">900</text><text x="206.80" y="112.34" font-size="6.3" fill="#d8805a" text-anchor="end" stroke="#d8805a" stroke-width="0.08">950</text><text x="206.80" y="94.05" font-size="6.3" fill="#d8805a" text-anchor="end" stroke="#d8805a" stroke-width="0.08">1000</text><text x="206.80" y="75.76" font-size="6.3" fill="#d8805a" text-anchor="end" stroke="#d8805a" stroke-width="0.08">1050</text><text x="206.80" y="57.47" font-size="6.3" fill="#d8805a" text-anchor="end" stroke="#d8805a" stroke-width="0.08">1100</text><text x="0" y="0" transform="translate(191.6 274.8) rotate(-90)" text-anchor="middle" font-size="7.4" fill="#d8805a" stroke="#d8805a" stroke-width="0.15">[-]</text><rect x="213.20" y="494.38" width="798.40" height="1.40" fill="#8a8a8a" /><rect x="213.20" y="495.77" width="798.40" height="0.80" fill="#464646" /><rect x="213.20" y="496.57" width="798.40" height="4.00" fill="#6a6a6a" /><path d="M213.20 496.57V501.07M218.35 496.57V499.57M223.50 496.57V499.57M228.65 496.57V499.57M233.80 496.57V499.57M238.95 496.57V501.07M244.11 496.57V499.57M249.26 496.57V499.57M254.41 496.57V499.57M259.56 496.57V499.57M264.71 496.57V501.07M269.86 496.57V499.57M275.01 496.57V499.57M280.16 496.57V499.57M285.31 496.57V499.57M290.46 496.57V501.07M295.62 496.57V499.57M300.77 496.57V499.57M305.92 496.57V499.57M311.07 496.57V499.57M316.22 496.57V501.07M321.37 496.57V499.57M326.52 496.57V499.57M331.67 496.57V499.57M336.82 496.57V499.57M341.97 496.57V501.07M347.13 496.57V499.57M352.28 496.57V499.57M357.43 496.57V499.57M362.58 496.57V499.57M367.73 496.57V501.07M372.88 496.57V499.57M378.03 496.57V499.57M383.18 496.57V499.57M388.33 496.57V499.57M393.48 496.57V501.07M398.63 496.57V499.57M403.79 496.57V499.57M408.94 496.57V499.57M414.09 496.57V499.57M419.24 496.57V501.07M424.39 496.57V499.57M429.54 496.57V499.57M434.69 496.57V499.57M439.84 496.57V499.57M444.99 496.57V501.07M450.14 496.57V499.57M455.30 496.57V499.57M460.45 496.57V499.57M465.60 496.57V499.57M470.75 496.57V501.07M475.90 496.57V499.57M481.05 496.57V499.57M486.20 496.57V499.57M491.35 496.57V499.57M496.50 496.57V501.07M501.65 496.57V499.57M506.81 496.57V499.57M511.96 496.57V499.57M517.11 496.57V499.57M522.26 496.57V501.07M527.41 496.57V499.57M532.56 496.57V499.57M537.71 496.57V499.57M542.86 496.57V499.57M548.01 496.57V501.07M553.16 496.57V499.57M558.31 496.57V499.57M563.47 496.57V499.57M568.62 496.57V499.57M573.77 496.57V501.07M578.92 496.57V499.57M584.07 496.57V499.57M589.22 496.57V499.57M594.37 496.57V499.57M599.52 496.57V501.07M604.67 496.57V499.57M609.82 496.57V499.57M614.98 496.57V499.57M620.13 496.57V499.57M625.28 496.57V501.07M630.43 496.57V499.57M635.58 496.57V499.57M640.73 496.57V499.57M645.88 496.57V499.57M651.03 496.57V501.07M656.18 496.57V499.57M661.33 496.57V499.57M666.49 496.57V499.57M671.64 496.57V499.57M676.79 496.57V501.07M681.94 496.57V499.57M687.09 496.57V499.57M692.24 496.57V499.57M697.39 496.57V499.57M702.54 496.57V501.07M707.69 496.57V499.57M712.84 496.57V499.57M717.99 496.57V499.57M723.15 496.57V499.57M728.30 496.57V501.07M733.45 496.57V499.57M738.60 496.57V499.57M743.75 496.57V499.57M748.90 496.57V499.57M754.05 496.57V501.07M759.20 496.57V499.57M764.35 496.57V499.57M769.50 496.57V499.57M774.66 496.57V499.57M779.81 496.57V501.07M784.96 496.57V499.57M790.11 496.57V499.57M795.26 496.57V499.57M800.41 496.57V499.57M805.56 496.57V501.07M810.71 496.57V499.57M815.86 496.57V499.57M821.01 496.57V499.57M826.17 496.57V499.57M831.32 496.57V501.07M836.47 496.57V499.57M841.62 496.57V499.57M846.77 496.57V499.57M851.92 496.57V499.57M857.07 496.57V501.07M862.22 496.57V499.57M867.37 496.57V499.57M872.52 496.57V499.57M877.67 496.57V499.57M882.83 496.57V501.07M887.98 496.57V499.57M893.13 496.57V499.57M898.28 496.57V499.57M903.43 496.57V499.57M908.58 496.57V501.07M913.73 496.57V499.57M918.88 496.57V499.57M924.03 496.57V499.57M929.18 496.57V499.57M934.34 496.57V501.07M939.49 496.57V499.57M944.64 496.57V499.57M949.79 496.57V499.57M954.94 496.57V499.57M960.09 496.57V501.07M965.24 496.57V499.57M970.39 496.57V499.57M975.54 496.57V499.57M980.69 496.57V499.57M985.85 496.57V501.07M991.00 496.57V499.57M996.15 496.57V499.57M1001.30 496.57V499.57M1006.45 496.57V499.57M1011.60 496.57V501.07" stroke="#808080" stroke-width="0.7" fill="none"/><text x="213.20" y="507.90" font-size="7.2" fill="#141414" text-anchor="middle" textLength="3.22" lengthAdjust="spacingAndGlyphs" stroke="#141414" stroke-width="0.2">0</text><text x="238.95" y="507.90" font-size="7.2" fill="#141414" text-anchor="middle" textLength="12.88" lengthAdjust="spacingAndGlyphs" stroke="#141414" stroke-width="0.2">1000</text><text x="264.71" y="507.90" font-size="7.2" fill="#141414" text-anchor="middle" textLength="12.88" lengthAdjust="spacingAndGlyphs" stroke="#141414" stroke-width="0.2">2000</text><text x="290.46" y="507.90" font-size="7.2" fill="#141414" text-anchor="middle" textLength="12.88" lengthAdjust="spacingAndGlyphs" stroke="#141414" stroke-width="0.2">3000</text><text x="316.22" y="507.90" font-size="7.2" fill="#141414" text-anchor="middle" textLength="12.88" lengthAdjust="spacingAndGlyphs" stroke="#141414" stroke-width="0.2">4000</text><text x="341.97" y="507.90" font-size="7.2" fill="#141414" text-anchor="middle" textLength="12.88" lengthAdjust="spacingAndGlyphs" stroke="#141414" stroke-width="0.2">5000</text><text x="367.73" y="507.90" font-size="7.2" fill="#141414" text-anchor="middle" textLength="12.88" lengthAdjust="spacingAndGlyphs" stroke="#141414" stroke-width="0.2">6000</text><text x="393.48" y="507.90" font-size="7.2" fill="#141414" text-anchor="middle" textLength="12.88" lengthAdjust="spacingAndGlyphs" stroke="#141414" stroke-width="0.2">7000</text><text x="419.24" y="507.90" font-size="7.2" fill="#141414" text-anchor="middle" textLength="12.88" lengthAdjust="spacingAndGlyphs" stroke="#141414" stroke-width="0.2">8000</text><text x="444.99" y="507.90" font-size="7.2" fill="#141414" text-anchor="middle" textLength="12.88" lengthAdjust="spacingAndGlyphs" stroke="#141414" stroke-width="0.2">9000</text><text x="470.75" y="507.90" font-size="7.2" fill="#141414" text-anchor="middle" textLength="16.10" lengthAdjust="spacingAndGlyphs" stroke="#141414" stroke-width="0.2">10000</text><text x="496.50" y="507.90" font-size="7.2" fill="#141414" text-anchor="middle" textLength="16.10" lengthAdjust="spacingAndGlyphs" stroke="#141414" stroke-width="0.2">11000</text><text x="522.26" y="507.90" font-size="7.2" fill="#141414" text-anchor="middle" textLength="16.10" lengthAdjust="spacingAndGlyphs" stroke="#141414" stroke-width="0.2">12000</text><text x="548.01" y="507.90" font-size="7.2" fill="#141414" text-anchor="middle" textLength="16.10" lengthAdjust="spacingAndGlyphs" stroke="#141414" stroke-width="0.2">13000</text><text x="573.77" y="507.90" font-size="7.2" fill="#141414" text-anchor="middle" textLength="16.10" lengthAdjust="spacingAndGlyphs" stroke="#141414" stroke-width="0.2">14000</text><text x="599.52" y="507.90" font-size="7.2" fill="#141414" text-anchor="middle" textLength="16.10" lengthAdjust="spacingAndGlyphs" stroke="#141414" stroke-width="0.2">15000</text><text x="625.28" y="507.90" font-size="7.2" fill="#141414" text-anchor="middle" textLength="16.10" lengthAdjust="spacingAndGlyphs" stroke="#141414" stroke-width="0.2">16000</text><text x="651.03" y="507.90" font-size="7.2" fill="#141414" text-anchor="middle" textLength="16.10" lengthAdjust="spacingAndGlyphs" stroke="#141414" stroke-width="0.2">17000</text><text x="676.79" y="507.90" font-size="7.2" fill="#141414" text-anchor="middle" textLength="16.10" lengthAdjust="spacingAndGlyphs" stroke="#141414" stroke-width="0.2">18000</text><text x="702.54" y="507.90" font-size="7.2" fill="#141414" text-anchor="middle" textLength="16.10" lengthAdjust="spacingAndGlyphs" stroke="#141414" stroke-width="0.2">19000</text><text x="728.30" y="507.90" font-size="7.2" fill="#141414" text-anchor="middle" textLength="16.10" lengthAdjust="spacingAndGlyphs" stroke="#141414" stroke-width="0.2">20000</text><text x="754.05" y="507.90" font-size="7.2" fill="#141414" text-anchor="middle" textLength="16.10" lengthAdjust="spacingAndGlyphs" stroke="#141414" stroke-width="0.2">21000</text><text x="779.81" y="507.90" font-size="7.2" fill="#141414" text-anchor="middle" textLength="16.10" lengthAdjust="spacingAndGlyphs" stroke="#141414" stroke-width="0.2">22000</text><text x="805.56" y="507.90" font-size="7.2" fill="#141414" text-anchor="middle" textLength="16.10" lengthAdjust="spacingAndGlyphs" stroke="#141414" stroke-width="0.2">23000</text><text x="831.32" y="507.90" font-size="7.2" fill="#141414" text-anchor="middle" textLength="16.10" lengthAdjust="spacingAndGlyphs" stroke="#141414" stroke-width="0.2">24000</text><text x="857.07" y="507.90" font-size="7.2" fill="#141414" text-anchor="middle" textLength="16.10" lengthAdjust="spacingAndGlyphs" stroke="#141414" stroke-width="0.2">25000</text><text x="882.83" y="507.90" font-size="7.2" fill="#141414" text-anchor="middle" textLength="16.10" lengthAdjust="spacingAndGlyphs" stroke="#141414" stroke-width="0.2">26000</text><text x="908.58" y="507.90" font-size="7.2" fill="#141414" text-anchor="middle" textLength="16.10" lengthAdjust="spacingAndGlyphs" stroke="#141414" stroke-width="0.2">27000</text><text x="934.34" y="507.90" font-size="7.2" fill="#141414" text-anchor="middle" textLength="16.10" lengthAdjust="spacingAndGlyphs" stroke="#141414" stroke-width="0.2">28000</text><text x="960.09" y="507.90" font-size="7.2" fill="#141414" text-anchor="middle" textLength="16.10" lengthAdjust="spacingAndGlyphs" stroke="#141414" stroke-width="0.2">29000</text><text x="985.85" y="507.90" font-size="7.2" fill="#141414" text-anchor="middle" textLength="16.10" lengthAdjust="spacingAndGlyphs" stroke="#141414" stroke-width="0.2">30000</text><text x="1011.60" y="507.90" font-size="7.2" fill="#141414" text-anchor="middle" textLength="16.10" lengthAdjust="spacingAndGlyphs" stroke="#141414" stroke-width="0.2">31000</text><text x="605.00" y="515.20" font-size="6.6" fill="#141414" textLength="14.60" lengthAdjust="spacingAndGlyphs" stroke="#141414" stroke-width="0.12">[ms]</text>
</svg></body></html>
